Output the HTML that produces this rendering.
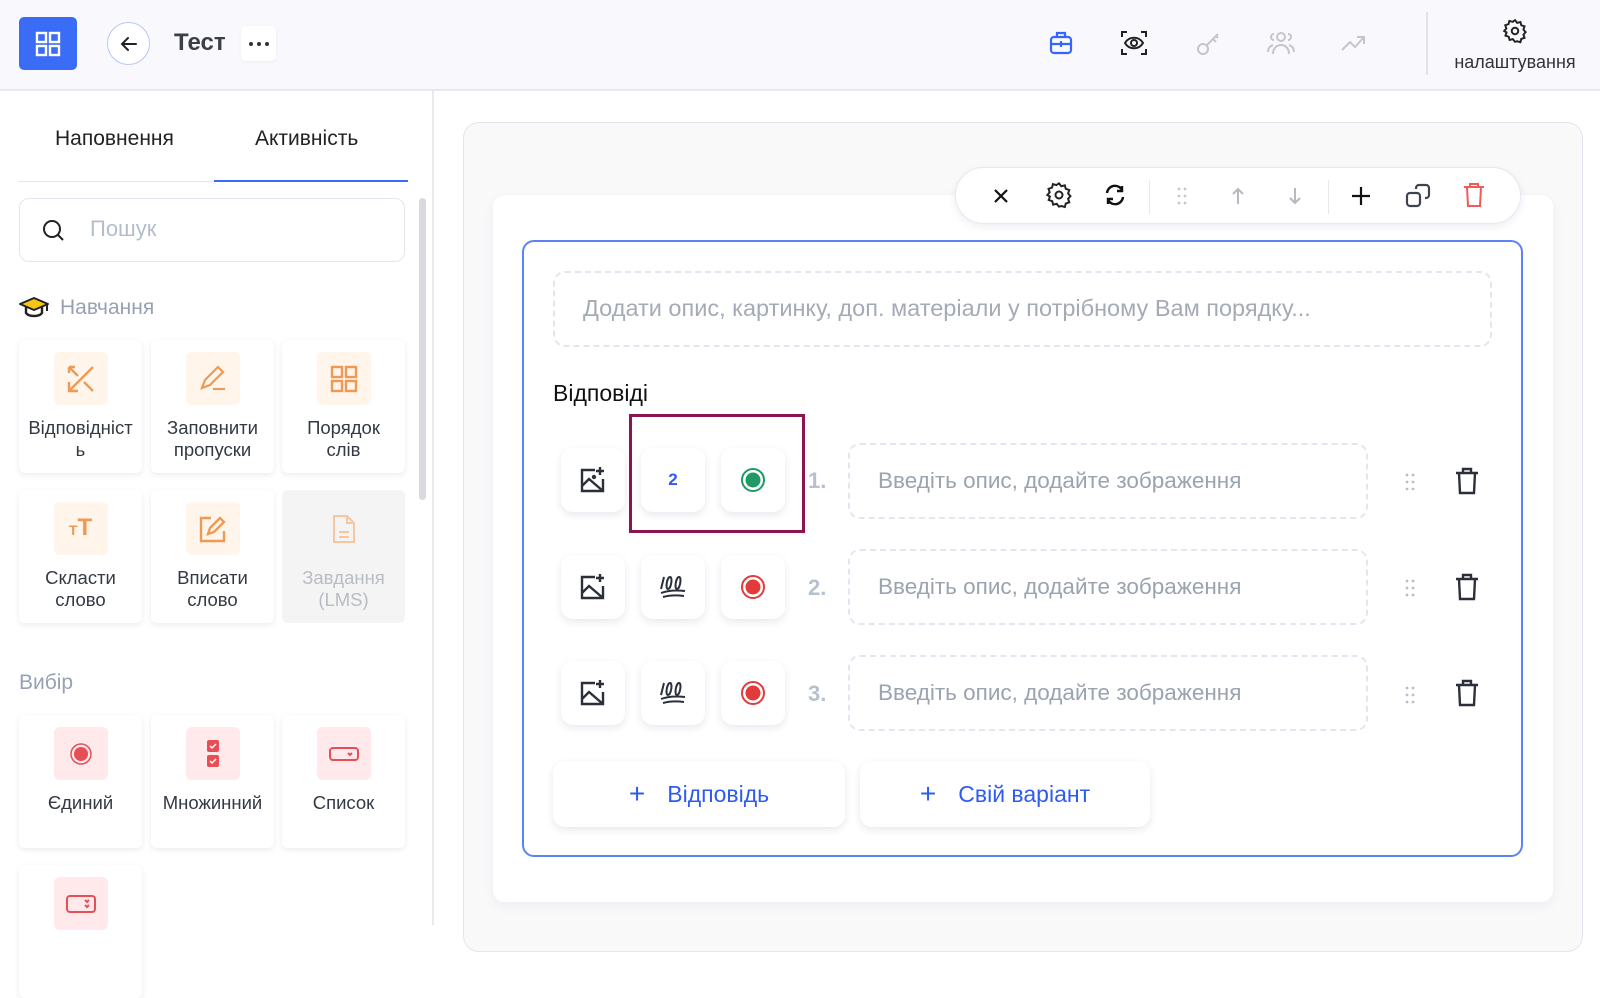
<!DOCTYPE html>
<html><head><meta charset="utf-8"><style>
*{box-sizing:border-box;margin:0;padding:0}
body{width:1600px;height:925px;position:relative;overflow:hidden;background:#fff;font-family:"Liberation Sans","DejaVu Sans",sans-serif;color:#1f2430}
.a{position:absolute}
.hdr{left:0;top:0;width:1600px;height:91px;background:#f9f9fd;border-bottom:2px solid #e6e7ef}
.card{position:absolute;width:123px;height:133px;background:#fff;border-radius:6px;box-shadow:0 2px 6px rgba(30,40,90,.09);text-align:center;font-size:18.5px;line-height:22px;color:#333a44}
.card .ib{width:54px;height:53px;border-radius:6px;margin:12px auto 12px;display:flex;align-items:center;justify-content:center}
.or{background:#fff5ea}.rd{background:#ffe9eb}
.sq{position:absolute;width:64px;height:64px;background:#fff;border-radius:12px;box-shadow:0 3px 8px rgba(30,40,90,.10);display:flex;align-items:center;justify-content:center}
.num{position:absolute;font-size:22px;color:#b7c0cf;font-weight:bold}
.inp{position:absolute;left:848px;width:520px;height:76px;border:2px dashed #e3e5f0;border-radius:12px;font-size:22.5px;color:#9aa3b0;padding:23px 28px}
.btn{position:absolute;top:761px;height:66px;background:#fff;border-radius:12px;box-shadow:0 3px 8px rgba(30,40,90,.10);color:#2f5cf0;font-size:23px;display:flex;align-items:center;justify-content:center;gap:22px}
</style></head><body>
<div class="a hdr"></div>
<div class="a" style="left:19px;top:17px;width:58px;height:53px;background:#3a6cf6;border-radius:5px;display:flex;align-items:center;justify-content:center">
<svg width="26" height="26" viewBox="0 0 26 26" fill="none" stroke="#fff" stroke-width="2.4"><rect x="2" y="2" width="9" height="9"/><rect x="15" y="2" width="9" height="9"/><rect x="2" y="15" width="9" height="9"/><rect x="15" y="15" width="9" height="9"/></svg></div>
<div class="a" style="left:107px;top:22px;width:43px;height:43px;border-radius:50%;border:1.5px solid #b9c6fb;background:#fff;display:flex;align-items:center;justify-content:center">
<svg width="20" height="20" viewBox="0 0 20 20" fill="none" stroke="#222" stroke-width="2" stroke-linecap="round"><path d="M17 10H3M9 4L3 10l6 6"/></svg></div>
<div class="a" style="left:174px;top:29px;font-size:24px;font-weight:bold;color:#3c3f46">Тест</div>
<div class="a" style="left:241px;top:26px;width:35px;height:35px;background:#fff;border-radius:5px;box-shadow:0 1px 3px rgba(0,0,0,.06);display:flex;align-items:center;justify-content:center;gap:4px">
<i style="width:4px;height:4px;border-radius:50%;background:#333"></i><i style="width:4px;height:4px;border-radius:50%;background:#333"></i><i style="width:4px;height:4px;border-radius:50%;background:#333"></i></div>
<!-- header icons -->
<svg class="a" style="left:1048px;top:30px" width="26" height="26" viewBox="0 0 26 26" fill="none" stroke="#3366ff" stroke-width="2.2"><rect x="3" y="7" width="20" height="16" rx="3"/><path d="M9 7V3h8v4M3 14h20M13 11v6"/></svg>
<svg class="a" style="left:1120px;top:29px" width="28" height="28" viewBox="0 0 28 28" fill="none" stroke="#222" stroke-width="2"><path d="M2 8V3h5M21 3h5v5M26 20v5h-5M7 25H2v-5"/><path d="M5 14c4-7 14-7 18 0c-4 7-14 7-18 0z"/><circle cx="14" cy="14" r="3"/></svg>
<svg class="a" style="left:1196px;top:30px" width="26" height="26" viewBox="0 0 26 26" fill="none" stroke="#c4c6cc" stroke-width="2"><circle cx="7" cy="19" r="5"/><path d="M11 15L22 4M17 9l3 3M20 6l2 2"/></svg>
<svg class="a" style="left:1266px;top:30px" width="30" height="26" viewBox="0 0 30 26" fill="none" stroke="#c4c6cc" stroke-width="2"><circle cx="15" cy="7" r="4"/><path d="M7 24c0-6 4-9 8-9s8 3 8 9M2 22c0-4 2-6 5-7M28 22c0-4-2-6-5-7M8 4a3 3 0 0 0 0 6M22 4a3 3 0 0 1 0 6"/></svg>
<svg class="a" style="left:1340px;top:33px" width="26" height="20" viewBox="0 0 26 20" fill="none" stroke="#c4c6cc" stroke-width="2"><path d="M2 17l8-8 5 5 9-10M17 4h7v7"/></svg>
<div class="a" style="left:1426px;top:12px;width:2px;height:63px;background:#e3e4ea"></div>
<svg class="a" style="left:1502px;top:18px" width="26" height="26" viewBox="0 0 24 24" fill="none" stroke="#222" stroke-width="1.8"><circle cx="12" cy="12" r="3"/><path d="M12 2l2 2.5 3-.8.8 3 3 1-1 3 2 2.3-2 2.3 1 3-3 1-.8 3-3-.8L12 22l-2-2.5-3 .8-.8-3-3-1 1-3L2 12l2-2.3-1-3 3-1 .8-3 3 .8z"/></svg>
<div class="a" style="left:1430px;top:52px;width:170px;text-align:center;font-size:18px;color:#333">налаштування</div>
<!-- sidebar -->
<div class="a" style="left:432px;top:91px;width:2px;height:834px;background:#e8e9ef"></div>
<div class="a" style="left:55px;top:127px;font-size:21px;color:#222">Наповнення</div>
<div class="a" style="left:255px;top:127px;font-size:21px;color:#222">Активність</div>
<div class="a" style="left:19px;top:181px;width:195px;height:1px;background:#e3e4ea"></div>
<div class="a" style="left:214px;top:180px;width:194px;height:2px;background:#3a6cf6"></div>
<div class="a" style="left:19px;top:198px;width:386px;height:64px;border:1.5px solid #e3e5ee;border-radius:10px"></div>
<svg class="a" style="left:41px;top:218px" width="26" height="26" viewBox="0 0 26 26" fill="none" stroke="#222" stroke-width="2"><circle cx="11" cy="11" r="8"/><path d="M17 17l5 5"/></svg>
<div class="a" style="left:90px;top:216px;font-size:22px;color:#b4bdcc">Пошук</div>
<div class="a" style="left:419px;top:198px;width:7px;height:302px;background:#d9dadf;border-radius:4px"></div>
<svg class="a" style="left:18px;top:296px" width="32" height="24" viewBox="0 0 32 24"><path d="M16 2L2 8l14 6 14-6z" fill="#f6c515" stroke="#222" stroke-width="2" stroke-linejoin="round"/><path d="M8 11v6c3 4 13 4 16 0v-6" fill="none" stroke="#222" stroke-width="2.4"/><path d="M29 8v7" stroke="#222" stroke-width="2"/></svg>
<div class="a" style="left:60px;top:296px;font-size:21px;color:#97a1b3">Навчання</div>

<div class="card" style="left:19px;top:340px"><div class="ib or"><svg width="30" height="30" viewBox="0 0 30 30" fill="none" stroke="#ee9a55" stroke-width="2.4"><path d="M27 3L3 27M3 18v9h9M3 3l9 9M3 3v6M3 3h6M18 18l9 9"/></svg></div>Відповідніст<br>ь</div>
<div class="card" style="left:151px;top:340px"><div class="ib or"><svg width="30" height="30" viewBox="0 0 30 30" fill="none" stroke="#ee9a55" stroke-width="2.2"><path d="M4 24l3-8L20 3l5 5-13 13zM15 25h12"/></svg></div>Заповнити<br>пропуски</div>
<div class="card" style="left:282px;top:340px"><div class="ib or"><svg width="28" height="28" viewBox="0 0 28 28" fill="none" stroke="#ee9a55" stroke-width="2.4"><rect x="2" y="2" width="10" height="10"/><rect x="16" y="2" width="10" height="10"/><rect x="2" y="16" width="10" height="10"/><rect x="16" y="16" width="10" height="10"/></svg></div>Порядок<br>слів</div>
<div class="card" style="left:19px;top:490px"><div class="ib or"><span style="color:#ee9a55;font-size:24px;font-weight:bold"><span style="font-size:14px">T</span>T</span></div>Скласти<br>слово</div>
<div class="card" style="left:151px;top:490px"><div class="ib or"><svg width="30" height="30" viewBox="0 0 30 30" fill="none" stroke="#ee9a55" stroke-width="2.4"><path d="M13 4H3v23h23V17M10 20l2-6L22 4l4 4-10 10z"/></svg></div>Вписати<br>слово</div>
<div class="card" style="left:282px;top:490px;background:#f4f4f5;box-shadow:none;color:#b8bcc3"><div class="ib" style="background:transparent"><svg width="26" height="30" viewBox="0 0 26 30" fill="none" stroke="#f6c6a0" stroke-width="2"><path d="M3 2h13l7 7v19H3zM16 2v7h7M8 18h10M8 23h10"/></svg></div>Завдання<br>(LMS)</div>
<div class="a" style="left:19px;top:671px;font-size:21px;color:#97a1b3">Вибір</div>
<div class="card" style="left:19px;top:715px"><div class="ib rd"><svg width="24" height="24" viewBox="0 0 24 24"><circle cx="12" cy="12" r="10" fill="none" stroke="#e84e55" stroke-width="1.5"/><circle cx="12" cy="12" r="7" fill="#e84e55"/></svg></div>Єдиний</div>
<div class="card" style="left:151px;top:715px"><div class="ib rd"><svg width="14" height="30" viewBox="0 0 14 30"><rect x="1" y="1" width="12" height="12" rx="2" fill="#e84e55"/><rect x="1" y="16" width="12" height="12" rx="2" fill="#e84e55"/><path d="M4 7l2 2 4-4M4 22l2 2 4-4" stroke="#fff" stroke-width="1.5" fill="none"/></svg></div>Множинний</div>
<div class="card" style="left:282px;top:715px"><div class="ib rd"><svg width="30" height="16" viewBox="0 0 30 16" fill="none" stroke="#e84e55" stroke-width="2"><rect x="1" y="2" width="28" height="12" rx="3"/><path d="M19 7l2 2 2-2"/></svg></div>Список</div>
<div class="card" style="left:19px;top:865px"><div class="ib rd"><svg width="30" height="20" viewBox="0 0 30 20" fill="none" stroke="#e84e55" stroke-width="2"><rect x="1" y="2" width="28" height="16" rx="3"/><path d="M19 6l2 2 2-2M19 11l2 2 2-2"/></svg></div></div>

<!-- main -->
<div class="a" style="left:463px;top:122px;width:1120px;height:830px;background:#f9f9fa;border:1.5px solid #e4e5ee;border-radius:16px"></div>
<div class="a" style="left:493px;top:195px;width:1060px;height:707px;background:#fff;border-radius:12px;box-shadow:0 4px 12px rgba(30,40,90,.05)"></div>
<div class="a" style="left:955px;top:167px;width:566px;height:57px;background:#fff;border:1.5px solid #e6e8f2;border-radius:29px;box-shadow:0 3px 8px rgba(30,40,90,.08)"></div>
<svg class="a" style="left:992px;top:187px" width="18" height="18" viewBox="0 0 18 18" stroke="#111" stroke-width="2.2"><path d="M3 3l12 12M15 3L3 15"/></svg>
<svg class="a" style="left:1045px;top:181px" width="28" height="28" viewBox="0 0 24 24" fill="none" stroke="#222" stroke-width="1.7"><circle cx="12" cy="12" r="3"/><path d="M12 2l2 2.5 3-.8.8 3 3 1-1 3 2 2.3-2 2.3 1 3-3 1-.8 3-3-.8L12 22l-2-2.5-3 .8-.8-3-3-1 1-3L2 12l2-2.3-1-3 3-1 .8-3 3 .8z"/></svg>
<svg class="a" style="left:1104px;top:184px" width="22" height="22" viewBox="0 0 22 22" fill="none" stroke="#111" stroke-width="2.4"><path d="M3 9a8 8 0 0 1 15-3M19 13a8 8 0 0 1-15 3M18 2v5h-5M4 20v-5h5"/></svg>
<div class="a" style="left:1149px;top:180px;width:1px;height:34px;background:#e6e8ee"></div>
<svg class="a" style="left:1176px;top:186px" width="12" height="20" viewBox="0 0 12 20" fill="#c1c8d6"><circle cx="3" cy="3" r="1.4"/><circle cx="9" cy="3" r="1.4"/><circle cx="3" cy="10" r="1.4"/><circle cx="9" cy="10" r="1.4"/><circle cx="3" cy="17" r="1.4"/><circle cx="9" cy="17" r="1.4"/></svg>
<svg class="a" style="left:1230px;top:186px" width="16" height="20" viewBox="0 0 16 20" fill="none" stroke="#b5b9c2" stroke-width="2"><path d="M8 18V3M3 8l5-5 5 5"/></svg>
<svg class="a" style="left:1287px;top:186px" width="16" height="20" viewBox="0 0 16 20" fill="none" stroke="#b5b9c2" stroke-width="2"><path d="M8 2v15M3 12l5 5 5-5"/></svg>
<div class="a" style="left:1328px;top:180px;width:1px;height:34px;background:#e6e8ee"></div>
<svg class="a" style="left:1350px;top:185px" width="22" height="22" viewBox="0 0 22 22" stroke="#111" stroke-width="2.2"><path d="M11 2v18M2 11h18"/></svg>
<svg class="a" style="left:1405px;top:183px" width="26" height="26" viewBox="0 0 26 26" fill="none" stroke="#3e4350" stroke-width="2.2"><rect x="2" y="10" width="13" height="13" rx="3"/><path d="M11 6V5a3 3 0 0 1 3-3h7a3 3 0 0 1 3 3v7a3 3 0 0 1-3 3h-1"/></svg>
<svg class="a" style="left:1463px;top:182px" width="22" height="26" viewBox="0 0 22 26" fill="none" stroke="#f05a5a" stroke-width="2"><path d="M1 5h20M7 5V2h8v3M4 5l1 19h12l1-19"/></svg>

<div class="a" style="left:522px;top:240px;width:1001px;height:617px;border:2px solid #5b82f8;border-radius:12px"></div>
<div class="a" style="left:553px;top:271px;width:939px;height:76px;border:2px dashed #e3e5f0;border-radius:12px;font-size:23.5px;color:#a4abb6;padding:22px 28px">Додати опис, картинку, доп. матеріали у потрібному Вам порядку...</div>
<div class="a" style="left:553px;top:380px;font-size:23px;color:#111">Відповіді</div>

<!-- rows -->
<div class="sq" style="left:561px;top:448px"><svg width="30" height="30" viewBox="0 0 30 30" fill="none" stroke="#2a2f3a" stroke-width="2.4"><path d="M17 5H4v21h21V14M4 21l7-7 14 12M22 2v8M18 6h8"/><circle cx="16" cy="12" r="1"/></svg></div>
<div class="sq" style="left:641px;top:448px;color:#2f5cf0;font-weight:bold;font-size:17px">2</div>
<div class="sq" style="left:721px;top:448px"><svg width="26" height="26" viewBox="0 0 26 26"><circle cx="13" cy="13" r="11" fill="none" stroke="#1f9a64" stroke-width="2"/><circle cx="13" cy="13" r="7.5" fill="#1f9a64"/></svg></div>
<div class="a" style="left:629px;top:414px;width:176px;height:119px;border:3px solid #8b1550"></div>
<div class="num" style="left:808px;top:468px">1.</div>
<div class="inp" style="top:443px">Введіть опис, додайте зображення</div>

<div class="sq" style="left:561px;top:555px"><svg width="30" height="30" viewBox="0 0 30 30" fill="none" stroke="#2a2f3a" stroke-width="2.4"><path d="M17 5H4v21h21V14M4 21l7-7 14 12M22 2v8M18 6h8"/></svg></div>
<div class="sq" style="left:641px;top:555px"><svg width="30" height="26" viewBox="0 0 30 26" fill="none" stroke="#2a2f3a" stroke-width="2"><path d="M6 3L3 15M12 3c-3 0-5 12-2 12s5-12 2-12zM21 3c-3 0-5 12-2 12s5-12 2-12zM3 19c8-3 16-3 24-2M5 23c7-2 14-2 21-1"/></svg></div>
<div class="sq" style="left:721px;top:555px"><svg width="26" height="26" viewBox="0 0 26 26"><circle cx="13" cy="13" r="11" fill="none" stroke="#e23b3b" stroke-width="2"/><circle cx="13" cy="13" r="7.5" fill="#e23b3b"/></svg></div>
<div class="num" style="left:808px;top:575px">2.</div>
<div class="inp" style="top:549px">Введіть опис, додайте зображення</div>

<div class="sq" style="left:561px;top:661px"><svg width="30" height="30" viewBox="0 0 30 30" fill="none" stroke="#2a2f3a" stroke-width="2.4"><path d="M17 5H4v21h21V14M4 21l7-7 14 12M22 2v8M18 6h8"/></svg></div>
<div class="sq" style="left:641px;top:661px"><svg width="30" height="26" viewBox="0 0 30 26" fill="none" stroke="#2a2f3a" stroke-width="2"><path d="M6 3L3 15M12 3c-3 0-5 12-2 12s5-12 2-12zM21 3c-3 0-5 12-2 12s5-12 2-12zM3 19c8-3 16-3 24-2M5 23c7-2 14-2 21-1"/></svg></div>
<div class="sq" style="left:721px;top:661px"><svg width="26" height="26" viewBox="0 0 26 26"><circle cx="13" cy="13" r="11" fill="none" stroke="#e23b3b" stroke-width="2"/><circle cx="13" cy="13" r="7.5" fill="#e23b3b"/></svg></div>
<div class="num" style="left:808px;top:681px">3.</div>
<div class="inp" style="top:655px">Введіть опис, додайте зображення</div>

<svg class="a" style="left:1404px;top:472px" width="12" height="20" viewBox="0 0 12 20" fill="#b7bfcc"><circle cx="3" cy="3" r="1.4"/><circle cx="9" cy="3" r="1.4"/><circle cx="3" cy="10" r="1.4"/><circle cx="9" cy="10" r="1.4"/><circle cx="3" cy="17" r="1.4"/><circle cx="9" cy="17" r="1.4"/></svg>
<svg class="a" style="left:1404px;top:578px" width="12" height="20" viewBox="0 0 12 20" fill="#b7bfcc"><circle cx="3" cy="3" r="1.4"/><circle cx="9" cy="3" r="1.4"/><circle cx="3" cy="10" r="1.4"/><circle cx="9" cy="10" r="1.4"/><circle cx="3" cy="17" r="1.4"/><circle cx="9" cy="17" r="1.4"/></svg>
<svg class="a" style="left:1404px;top:685px" width="12" height="20" viewBox="0 0 12 20" fill="#b7bfcc"><circle cx="3" cy="3" r="1.4"/><circle cx="9" cy="3" r="1.4"/><circle cx="3" cy="10" r="1.4"/><circle cx="9" cy="10" r="1.4"/><circle cx="3" cy="17" r="1.4"/><circle cx="9" cy="17" r="1.4"/></svg>
<svg class="a" style="left:1455px;top:467px" width="24" height="28" viewBox="0 0 24 28" fill="none" stroke="#2a2f3a" stroke-width="2.4"><path d="M1 6h22M8 6V2h8v4M4 6l1 20h14l1-20"/></svg>
<svg class="a" style="left:1455px;top:573px" width="24" height="28" viewBox="0 0 24 28" fill="none" stroke="#2a2f3a" stroke-width="2.4"><path d="M1 6h22M8 6V2h8v4M4 6l1 20h14l1-20"/></svg>
<svg class="a" style="left:1455px;top:679px" width="24" height="28" viewBox="0 0 24 28" fill="none" stroke="#2a2f3a" stroke-width="2.4"><path d="M1 6h22M8 6V2h8v4M4 6l1 20h14l1-20"/></svg>

<div class="btn" style="left:553px;width:292px"><span style="font-size:28px;font-weight:300">+</span>Відповідь</div>
<div class="btn" style="left:860px;width:290px"><span style="font-size:28px;font-weight:300">+</span>Свій варіант</div>
</body></html>
